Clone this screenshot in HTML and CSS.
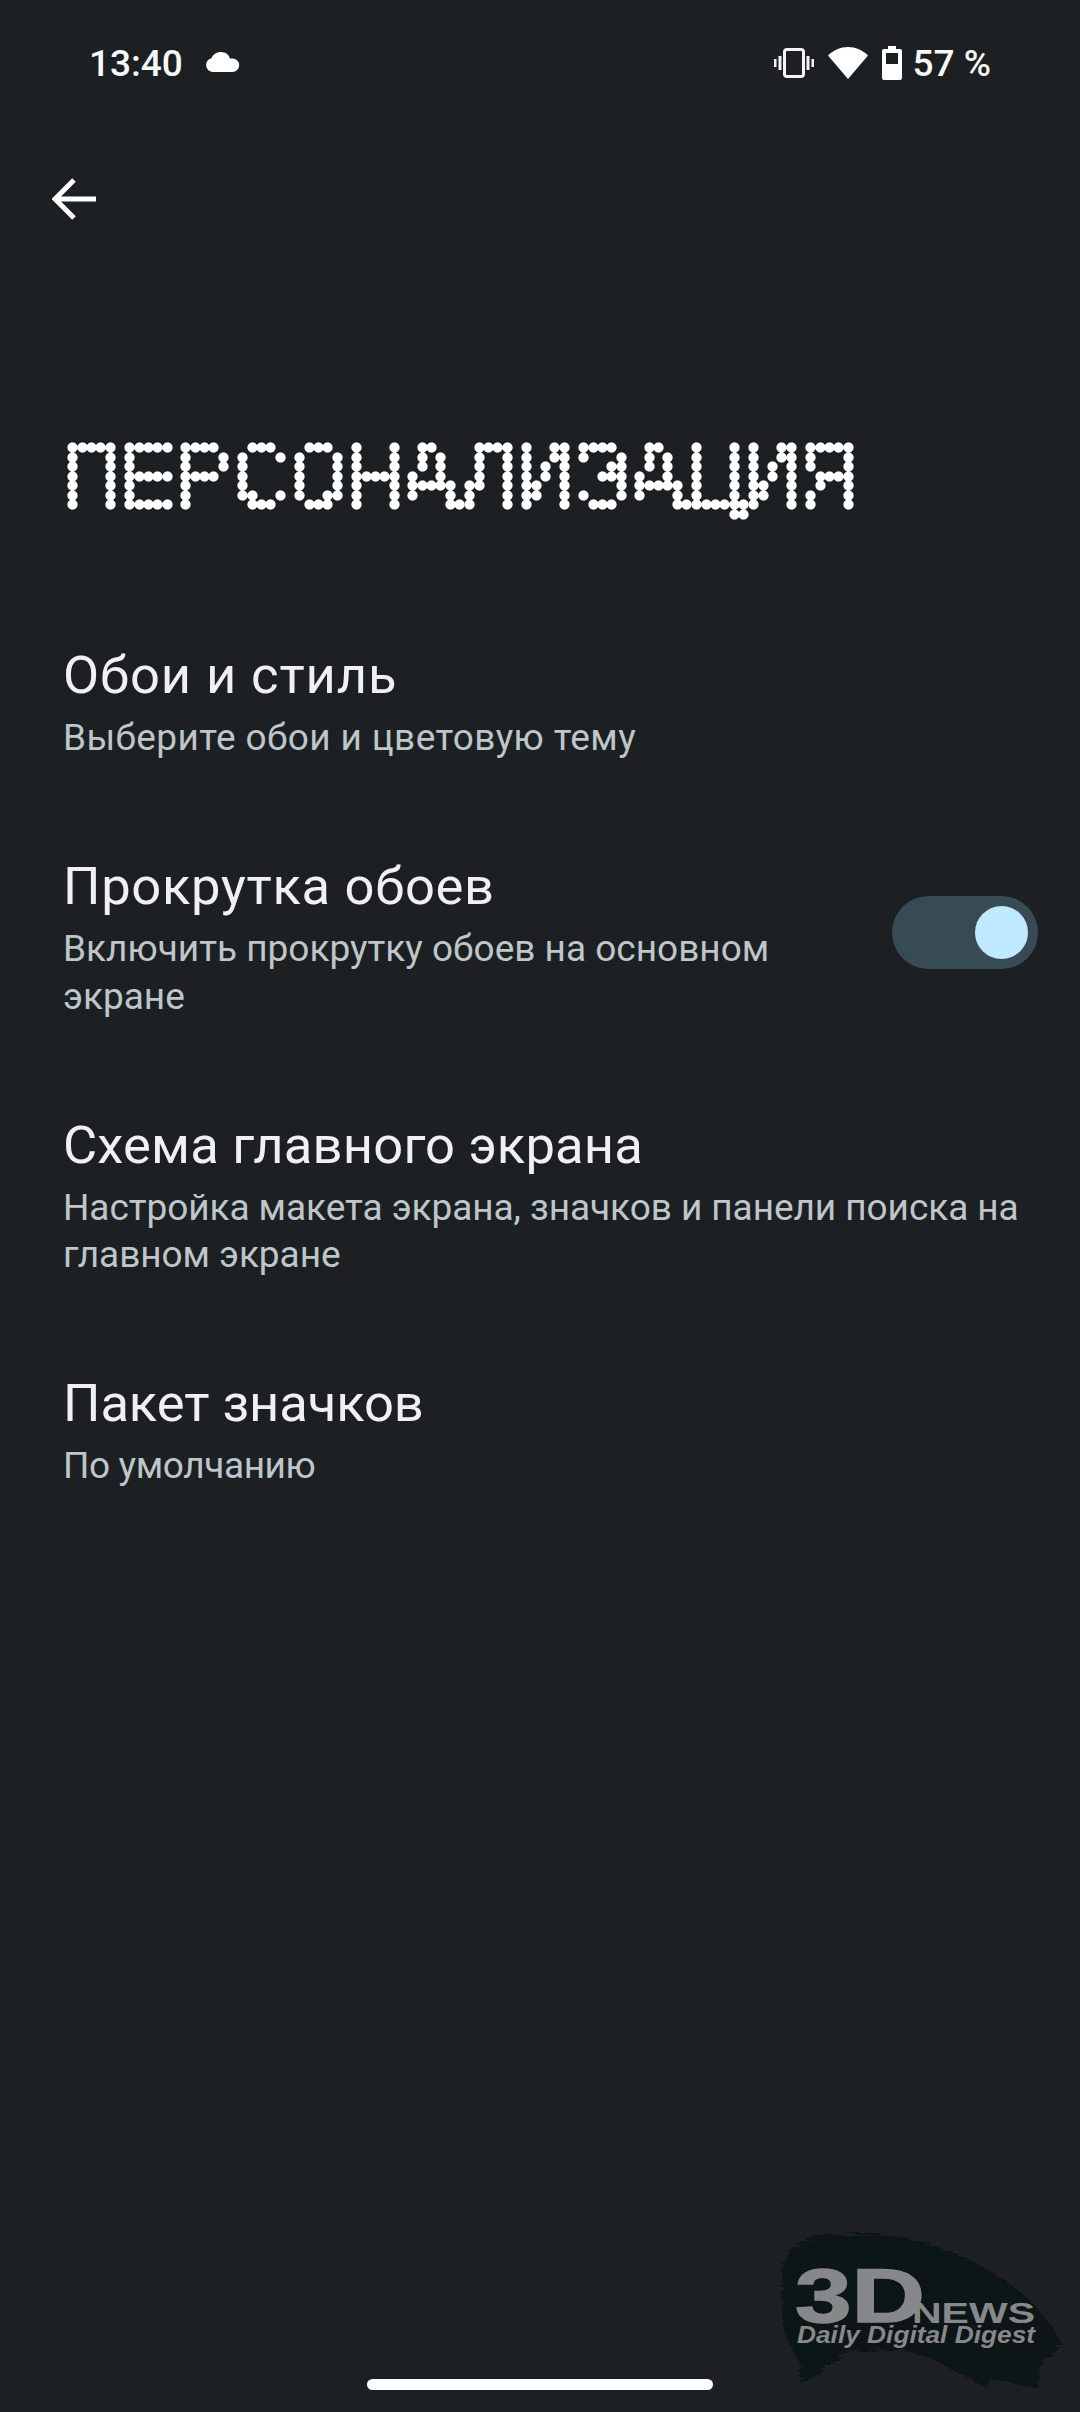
FILE: index.html
```html
<!DOCTYPE html>
<html lang="ru">
<head>
<meta charset="utf-8">
<title>Персонализация</title>
<link rel="stylesheet" href="styles.css">
</head>
<body>
<svg class="defs" width="0" height="0" aria-hidden="true">
  <defs>
    <filter id="dotmatrix" x="-30%" y="-10%" width="160%" height="120%" primitiveUnits="userSpaceOnUse" color-interpolation-filters="sRGB">
      <feFlood x="11" y="-20" width="1" height="140" flood-color="#fff" result="c0"/>
      <feFlood x="21" y="-20" width="1" height="140" flood-color="#fff" result="c1"/>
      <feFlood x="30" y="-20" width="1" height="140" flood-color="#fff" result="c2"/>
      <feFlood x="39" y="-20" width="1" height="140" flood-color="#fff" result="c3"/>
      <feFlood x="49" y="-20" width="1" height="140" flood-color="#fff" result="c4"/>
      <feFlood x="58" y="-20" width="1" height="140" flood-color="#fff" result="c5"/>
      <feMerge result="cols">
        <feMergeNode in="c0"/><feMergeNode in="c1"/><feMergeNode in="c2"/>
        <feMergeNode in="c3"/><feMergeNode in="c4"/><feMergeNode in="c5"/>
      </feMerge>
      <feFlood x="-20" y="16" width="100" height="1" flood-color="#fff" result="r0"/>
      <feFlood x="-20" y="26" width="100" height="1" flood-color="#fff" result="r1"/>
      <feFlood x="-20" y="35" width="100" height="1" flood-color="#fff" result="r2"/>
      <feFlood x="-20" y="45" width="100" height="1" flood-color="#fff" result="r3"/>
      <feFlood x="-20" y="54" width="100" height="1" flood-color="#fff" result="r4"/>
      <feFlood x="-20" y="64" width="100" height="1" flood-color="#fff" result="r5"/>
      <feFlood x="-20" y="73" width="100" height="1" flood-color="#fff" result="r6"/>
      <feFlood x="-20" y="83" width="100" height="1" flood-color="#fff" result="r7"/>
      <feMerge result="rows">
        <feMergeNode in="r0"/><feMergeNode in="r1"/><feMergeNode in="r2"/><feMergeNode in="r3"/>
        <feMergeNode in="r4"/><feMergeNode in="r5"/><feMergeNode in="r6"/><feMergeNode in="r7"/>
      </feMerge>
      <feComposite in="cols" in2="rows" operator="in" result="grid"/>
      <feComposite in="SourceGraphic" in2="grid" operator="in"/>
      <feComponentTransfer>
        <feFuncA type="linear" slope="16" intercept="-5"/>
      </feComponentTransfer>
      <feConvolveMatrix order="11" divisor="1" edgeMode="none" preserveAlpha="false" kernelMatrix="
        0 0 0 .2 .5 .6 .5 .2 0 0 0
        0 0 .6 1 1 1 1 1 .6 0 0
        0 .6 1 1 1 1 1 1 1 .6 0
        .2 1 1 1 1 1 1 1 1 1 .2
        .5 1 1 1 1 1 1 1 1 1 .5
        .6 1 1 1 1 1 1 1 1 1 .6
        .5 1 1 1 1 1 1 1 1 1 .5
        .2 1 1 1 1 1 1 1 1 1 .2
        0 .6 1 1 1 1 1 1 1 .6 0
        0 0 .6 1 1 1 1 1 .6 0 0
        0 0 0 .2 .5 .6 .5 .2 0 0 0"/>
    </filter>
    <filter id="brush" x="-5%" y="-5%" width="110%" height="110%">
      <feTurbulence type="fractalNoise" baseFrequency="0.04 0.4" numOctaves="2" seed="4"/>
      <feDisplacementMap in="SourceGraphic" scale="10"/>
    </filter>
  </defs>
</svg>
<div class="page">
  <header class="status">
    <div class="status-left">
      <span class="time">13:40</span>
      <svg class="ic-cloud" viewBox="0 0 36 20"><path d="M9 20a7 7 0 0 1-1.600-13.800C9 2.500 12.500 0 17 0c4.500 0 8 2.800 9 6.600h2.500a6.700 6.700 0 0 1 0 13.400z"/></svg>
    </div>
    <div class="status-right">
      <svg class="ic-vib" viewBox="0 0 40 30"><rect x="10.500" y="1.500" width="19" height="27" rx="2.500"/><path d="M6 8v14M1 11v8M34 8v14M39 11v8"/></svg>
      <svg class="ic-wifi" viewBox="0 0 40 32"><path d="M20 32 0 8.500C5.500 3.200 12.500 0 20 0s14.500 3.200 20 8.500z"/></svg>
      <svg class="ic-bat" viewBox="0 0 20 34"><path d="M6 0h8v3h4a2 2 0 0 1 2 2v27a2 2 0 0 1-2 2H2a2 2 0 0 1-2-2V5a2 2 0 0 1 2-2h4zM4 7v11h12V7z" fill-rule="evenodd"/></svg>
      <span class="pct">57 %</span>
    </div>
  </header>
  <nav class="toolbar">
    <svg class="ic-back" viewBox="0 0 44 42"><path d="M44 21H4M22 2 3 21l19 19"/></svg>
  </nav>
  <h1 class="title"><span class="cell"><span class="glyph">П</span></span><span class="cell"><span class="glyph">Е</span></span><span class="cell"><span class="glyph">Р</span></span><span class="cell"><span class="glyph">С</span></span><span class="cell"><span class="glyph">О</span></span><span class="cell"><span class="glyph">Н</span></span><span class="cell"><span class="glyph">А</span></span><span class="cell"><span class="glyph">Л</span></span><span class="cell"><span class="glyph">И</span></span><span class="cell"><span class="glyph">З</span></span><span class="cell"><span class="glyph">А</span></span><span class="cell"><span class="glyph">Ц</span></span><span class="cell"><span class="glyph">И</span></span><span class="cell"><span class="glyph">Я</span></span></h1>
  <main class="list">
    <section class="row">
      <div class="row-text">
        <h2 class="row-title ls-a">Обои и стиль</h2>
        <p class="row-sub sub-a">Выберите обои и цветовую тему</p>
      </div>
    </section>
    <section class="row">
      <div class="row-text">
        <h2 class="row-title ls-b">Прокрутка обоев</h2>
        <p class="row-sub">Включить прокрутку обоев на основном экране</p>
      </div>
      <div class="switch"><span class="thumb"></span></div>
    </section>
    <section class="row">
      <div class="row-text wide">
        <h2 class="row-title ls-c">Схема главного экрана</h2>
        <p class="row-sub sub-c">Настройка макета экрана, значков и панели поиска на главном экране</p>
      </div>
    </section>
    <section class="row">
      <div class="row-text">
        <h2 class="row-title ls-d">Пакет значков</h2>
        <p class="row-sub sub-d">По умолчанию</p>
      </div>
    </section>
  </main>
  <div class="handle"></div>
  <svg class="mark" viewBox="0 0 320 190">
    <path class="blob" filter="url(#brush)" d="M22 50C28 30 40 20 50 18 85 10 130 14 160 22c25 6 50 16 70 30 28 14 55 40 72 72l-22 22-2 22-48-10-2 10-58-30c-25-10-60-12-85-4L42 164l-2-20-16-32-2-24z"/>
    <text class="m3d" x="35" y="102" textLength="130" lengthAdjust="spacingAndGlyphs">3D</text>
    <text class="mnews" x="152" y="103" textLength="123" lengthAdjust="spacingAndGlyphs">NEWS</text>
    <text class="mdig" x="37" y="123" textLength="238" lengthAdjust="spacingAndGlyphs">Daily Digital Digest</text>
  </svg>
</div>
</body>
</html>
```
FILE: styles.css
```css
* { box-sizing: border-box; }
html, body { margin: 0; padding: 0; background: #1c2023; }
.defs { position: absolute; }
.page {
  position: relative;
  width: 1080px;
  height: 2412px;
  display: flex;
  flex-direction: column;
  font-family: Roboto, "Noto Sans", sans-serif;
  color: #fff;
  overflow: hidden;
}
.status {
  height: 64px;
  margin-top: 31px;
  padding: 0 89px;
  display: flex;
  align-items: center;
  justify-content: space-between;
}
.status-left, .status-right { display: flex; align-items: center; }
.time, .pct { font-size: 37px; font-weight: 500; color: #f6f7f7; }
.ic-cloud { width: 36px; height: 20px; margin-left: 21px; margin-top: -3px; fill: #fff; }
.ic-vib { width: 40px; height: 30px; fill: none; stroke: #f4f4f4; stroke-width: 3; }
.ic-wifi { width: 40px; height: 32px; margin-left: 14px; fill: #fff; }
.ic-bat { width: 20px; height: 34px; margin-left: 14px; fill: #fff; }
.pct { margin-left: 11px; }
.toolbar { height: 80px; margin-top: 64px; padding-left: 52px; display: flex; align-items: center; }
.ic-back { width: 44px; height: 42px; fill: none; stroke: #fff; stroke-width: 5; }
.title {
  margin: 192px 0 0 60.800px;
  height: 100px;
  display: flex;
  font-family: "Liberation Mono", monospace;
  font-weight: 400;
  font-size: 94px;
  line-height: 80px;
  color: #fff;
  -webkit-text-stroke: 1.500px #fff;
}
.cell {
  display: block;
  flex: none;
  width: 56.750px;
  height: 100px;
  padding-top: 10px;
  filter: url(#dotmatrix);
}
.glyph {
  display: block;
  transform: scaleX(1.080);
  transform-origin: 11px 50%;
}
.list { margin-top: 114px; display: flex; flex-direction: column; }
.row {
  padding: 0 42px 0 63px;
  display: flex;
  align-items: center;
  justify-content: space-between;
  margin-bottom: 94.500px;
}
.row-text { width: 760px; }
.row-text.wide { width: 975px; }
.row-title { margin: 0; font-size: 52.500px; font-weight: 400; line-height: 60px; color: #eef0f1; }
.ls-a { letter-spacing: 0.9px; }
.ls-b { letter-spacing: 0.7px; }
.ls-c { letter-spacing: 0.18px; }
.ls-d { letter-spacing: -0.07px; }
.row-sub { margin: 9px 0 0; font-size: 37px; line-height: 47.500px; color: #bec6ca; }
.sub-a { letter-spacing: 0.37px; }
.sub-c { letter-spacing: -0.06px; }
.sub-d { letter-spacing: -0.38px; }
.switch {
  width: 146px;
  height: 73px;
  margin-bottom: 11px;
  border-radius: 37px;
  background: #384a53;
  display: flex;
  align-items: center;
  justify-content: flex-end;
  padding-right: 10px;
}
.thumb { width: 53px; height: 53px; border-radius: 50%; background: #bfe9ff; }
.handle {
  width: 346px;
  height: 11px;
  border-radius: 6px;
  background: #fff;
  margin: auto auto 22px;
}
.mark { position: absolute; left: 760px; top: 2220px; width: 320px; height: 190px; }
.blob { fill: #101214; }
.m3d { font: 700 76px "Liberation Sans", sans-serif; fill: #87888a; stroke: #87888a; stroke-width: 1.5px; }
.mnews { font: 700 29px "Liberation Sans", sans-serif; fill: #87888a; }
.mdig { font: italic 700 24px "Liberation Sans", sans-serif; fill: #87888a; }
```
